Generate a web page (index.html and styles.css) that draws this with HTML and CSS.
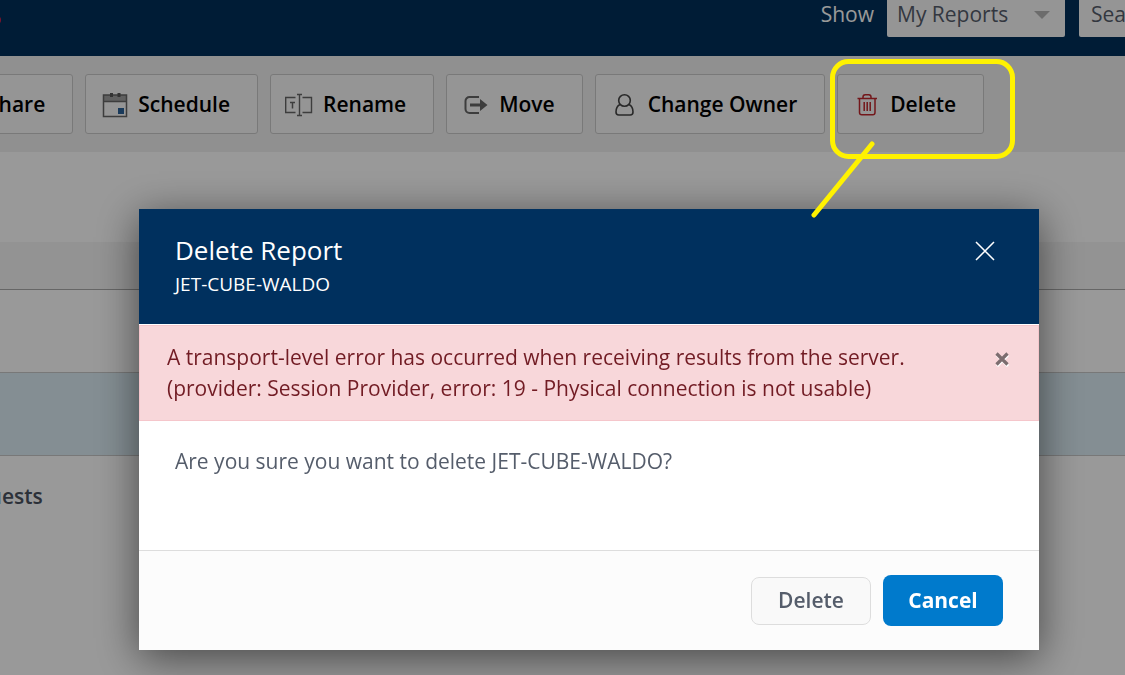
FILE: index.html
```html
<!DOCTYPE html>
<html lang="en">
<head>
  <meta charset="UTF-8">
  <title>Delete Report</title>
  <link rel="stylesheet" href="styles.css">
</head>
<body>
  <div class="page">
    <!-- top bar -->
    <header class="topbar">
      <span class="logo"></span>
      <label class="show-label" for="show">Show</label>
      <div class="select-wrap">
        <select id="show">
          <option>My Reports</option>
          <option>All Reports</option>
        </select>
        <span class="arrow"></span>
      </div>
      <input type="text" class="search" placeholder="Search" aria-label="Search">
    </header>

    <!-- actions -->
    <div class="toolbar">
      <button type="button" class="tool-btn share-btn">
        <svg class="icon" viewBox="0 0 28 28"></svg>
        Share
      </button>
      <button type="button" class="tool-btn">
        <svg class="icon" viewBox="0 0 28 28">
          <rect x="4" y="5" width="22" height="6" fill="#a0a0a0"/>
          <path d="M3.500 5h23v21.500h-23zM3.500 11.500h23" fill="none" stroke="#666" stroke-width="1.500"/>
          <path d="M10 3h3v4h-3zM17.500 3h3v4h-3z" fill="#555"/>
          <path d="M18 18h6v6h-6z" fill="#2a6298"/>
        </svg>
        Schedule
      </button>
      <button type="button" class="tool-btn">
        <svg class="icon" viewBox="0 0 28 28" fill="none" stroke="#666" stroke-width="1.400">
          <path d="M10.500 7.500h-9.800v15h9.800M17.500 7.500h9v15h-9M12 4.500h5M12 25.500h5M14.500 4.500v21"/>
          <path d="M5 12.500h5M7.500 12.500v6" stroke-width="1.500"/>
        </svg>
        Rename
      </button>
      <button type="button" class="tool-btn">
        <svg class="icon" viewBox="0 0 28 28">
          <path d="M18 7H8.500a4 4 0 0 0-4 4v8a4 4 0 0 0 4 4H18" fill="none" stroke="#666" stroke-width="2"/>
          <path d="M9 13.500h10V9l7.500 6-7.500 6v-4.500H9z" fill="#666"/>
        </svg>
        Move
      </button>
      <button type="button" class="tool-btn">
        <svg class="icon" viewBox="0 0 28 28" fill="none" stroke="#444" stroke-width="1.600">
          <circle cx="14.500" cy="10.500" r="5.800"/>
          <path d="M10 14.500c-3 1.500-4 4-4 7.500 0 2 .8 3 2.800 3h11.400c2 0 2.800-1 2.800-3 0-3.500-1-6-4-7.500"/>
        </svg>
        Change Owner
      </button>
      <button type="button" class="tool-btn">
        <svg class="icon" viewBox="0 0 28 28" fill="none" stroke="#c0272d" stroke-width="1.500">
          <path d="M5.500 8.500h19.500M11 8V7c0-1.500.8-2.300 2.200-2.300h3.600c1.400 0 2.200.8 2.200 2.300v1M7.500 9v13.500c0 1.500.8 2.300 2.300 2.300h10.900c1.500 0 2.300-.8 2.300-2.300V9M12.200 12v9M15.200 12v9M18.200 12v9"/>
        </svg>
        Delete
      </button>
    </div>

    <!-- report list -->
    <table class="reports">
      <thead>
        <tr><th></th></tr>
      </thead>
      <tbody>
        <tr><td></td></tr>
        <tr class="selected"><td></td></tr>
        <tr><td><div class="report-name">Requests</div></td></tr>
      </tbody>
    </table>
  </div>

  <div class="overlay">
    <div class="modal" role="dialog" aria-labelledby="modalTitle">
      <div class="modal-header">
        <div>
          <h2 id="modalTitle">Delete Report</h2>
          <div class="subtitle">JET-CUBE-WALDO</div>
        </div>
        <button type="button" class="close-btn" aria-label="Close">
          <svg width="20" height="20" viewBox="0 0 20 20"><path d="M1 1l18 18M19 1L1 19" stroke="#fff" stroke-width="1.500"/></svg>
        </button>
      </div>
      <div class="alert" role="alert">
        <p>A transport-level error has occurred when receiving results from the server. (provider: Session Provider, error: 19 - Physical connection is not usable)</p>
        <button type="button" class="alert-close" aria-label="Dismiss">
          <svg width="16" height="16" viewBox="0 0 16 16">
            <path d="M3 4l11 11M14 4L3 15" stroke="#fff" stroke-width="3"/>
            <path d="M2.500 2.500l11 11M13.500 2.500l-11 11" stroke="#7c6d6f" stroke-width="3.200"/>
          </svg>
        </button>
      </div>
      <div class="modal-body">Are you sure you want to delete JET-CUBE-WALDO?</div>
      <div class="modal-footer">
        <button type="button" class="btn">Delete</button>
        <button type="button" class="btn btn-primary">Cancel</button>
      </div>
    </div>
  </div>

  <!-- marker around the delete action -->
  <svg class="marker" width="190" height="162" viewBox="0 0 190 162" fill="none" stroke="#fff200" stroke-width="5" stroke-linecap="round">
    <rect x="4.500" y="4.500" width="180" height="95" rx="16"/>
    <path d="M44 87L-14 158"/>
  </svg>
</body>
</html>
```

FILE: styles.css
```css
* {
  box-sizing: border-box;
}
body {
  margin: 0;
  font-family: "Open Sans", "Noto Sans", sans-serif;
  font-size: 21px;
  color: #555d6b;
  background: #fff;
}
button, input, select {
  font-family: inherit;
  font-size: inherit;
}
button {
  cursor: pointer;
}
.page {
  height: 100vh;
  overflow: hidden;
}
.topbar {
  display: flex;
  align-items: flex-end;
  height: 56px;
  padding-bottom: 19px;
  background: #00305b;
  overflow: hidden;
}
.logo {
  width: 8px;
  height: 8px;
  margin: 0 auto 13px -7px;
  border-radius: 50%;
  background: #d0204a;
}
.show-label {
  margin-right: 13px;
  line-height: 46px;
  color: #fff;
}
.select-wrap {
  position: relative;
  width: 178px;
  margin-right: 14px;
}
.select-wrap select,
.search {
  display: block;
  width: 100%;
  height: 46px;
  padding: 0 10px;
  border: 0;
  border-radius: 2px;
  background: #f9f9f9;
  color: #555d6b;
  appearance: none;
}
.arrow {
  position: absolute;
  right: 15px;
  top: 20px;
  border: 8px solid transparent;
  border-top-color: #b5b5b5;
  border-bottom: 0;
  pointer-events: none;
}
.topbar .search {
  flex: none;
  width: 240px;
  padding: 0 12px;
  margin-right: -194px;
}
.search::placeholder {
  color: #555d6b;
}
.toolbar {
  display: flex;
  gap: 12px;
  padding: 18px 0;
  background: #f1f1f1;
}
.tool-btn {
  display: flex;
  flex: none;
  align-items: center;
  gap: 10px;
  height: 60px;
  padding: 0 27px 0 14px;
  border: 1px solid #cacaca;
  border-radius: 3px;
  background: #f9f9f9;
  color: #000;
  font-weight: 600;
}
.share-btn {
  margin-left: -66px;
}
.icon {
  width: 28px;
  height: 28px;
}
.reports {
  width: 100%;
  margin-top: 90px;
  border-collapse: separate;
  border-spacing: 0;
}
.reports th {
  height: 48px;
  background: #f5f5f5;
  border-bottom: 1px solid #aaa;
}
.reports td {
  height: 83px;
  padding: 0;
  border-bottom: 1px solid #c8c8c8;
}
.reports tr:last-child td {
  height: 80px;
  border-bottom: 0;
}
.reports .selected td {
  background: #dcedf5;
}
.report-name {
  margin-left: -50px;
  color: #4a5260;
  font-weight: 600;
}
.overlay {
  position: fixed;
  inset: 0;
  display: flex;
  justify-content: center;
  align-items: flex-start;
  padding: 209px 0 0 53px;
  background: rgba(0, 0, 0, 0.4);
}
.modal {
  width: 900px;
  max-width: 90%;
  background: #fff;
  box-shadow: 0 8px 40px rgba(0, 0, 0, 0.55);
}
.modal-header {
  display: flex;
  justify-content: space-between;
  align-items: flex-start;
  height: 115px;
  padding: 24px 44px 0 36px;
  background: #00305e;
  color: #fff;
}
.modal-header h2 {
  margin: 0;
  font-size: 26px;
  line-height: 34px;
  font-weight: 500;
}
.subtitle {
  font-size: 19px;
  line-height: 34px;
}
.close-btn, .alert-close {
  display: flex;
  padding: 0;
  border: 0;
  background: none;
}
.close-btn {
  margin-top: 8px;
}
.alert {
  display: flex;
  justify-content: space-between;
  align-items: flex-start;
  margin-top: 1px;
  padding: 16px 28px 16px 27px;
  border: 1px solid #f5c6cb;
  background: #f8d7da;
  color: #721c24;
}
.alert p {
  width: 760px;
  margin: 0;
  line-height: 31px;
}
.alert-close {
  margin-top: 9px;
}
.modal-body {
  height: 129px;
  padding: 25px 36px;
  line-height: 30px;
}
.modal-footer {
  display: flex;
  justify-content: flex-end;
  align-items: center;
  gap: 12px;
  height: 100px;
  padding: 0 36px;
  border-top: 1px solid #ddd;
  background: #fcfcfc;
}
.btn {
  width: 120px;
  height: 48px;
  padding: 0 0 2px;
  border: 1px solid #ddd;
  border-radius: 8px;
  background: #f9f9f9;
  color: #555d6b;
  font-weight: 600;
}
.btn-primary {
  height: 51px;
  border: 0;
  background: #007acc;
  color: #fff;
  font-weight: 700;
}
.marker {
  position: absolute;
  left: 828px;
  top: 57px;
  overflow: visible;
  pointer-events: none;
}
```
